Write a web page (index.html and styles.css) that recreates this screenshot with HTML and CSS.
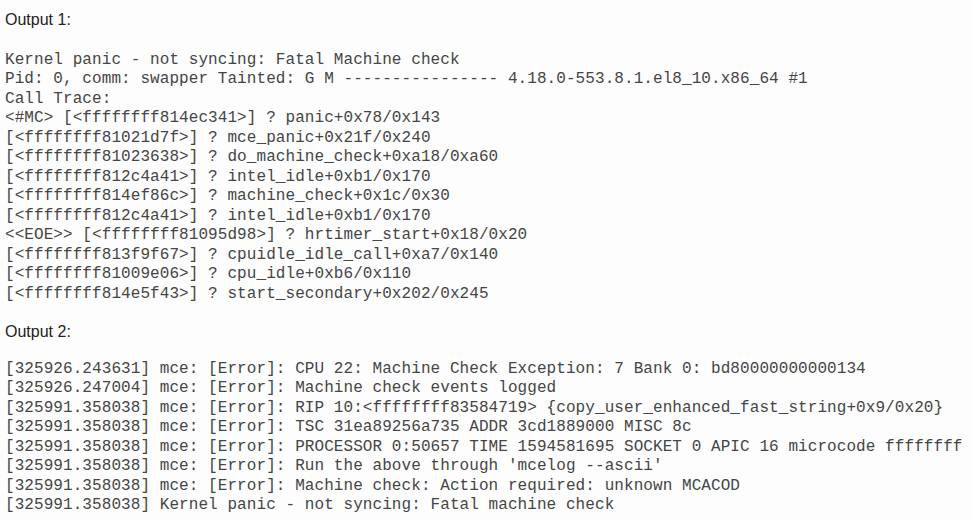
FILE: index.html
```html
<!DOCTYPE html>
<html>
<head>
<meta charset="utf-8">
<link rel="stylesheet" href="styles.css">
</head>
<body>
<main class="page">
<h2 class="heading heading-first">Output 1:</h2>
<pre class="log log-first">Kernel panic - not syncing: Fatal Machine check
Pid: 0, comm: swapper Tainted: G M ---------------- 4.18.0-553.8.1.el8_10.x86_64 #1
Call Trace:
&lt;#MC&gt; [&lt;ffffffff814ec341&gt;] ? panic+0x78/0x143
[&lt;ffffffff81021d7f&gt;] ? mce_panic+0x21f/0x240
[&lt;ffffffff81023638&gt;] ? do_machine_check+0xa18/0xa60
[&lt;ffffffff812c4a41&gt;] ? intel_idle+0xb1/0x170
[&lt;ffffffff814ef86c&gt;] ? machine_check+0x1c/0x30
[&lt;ffffffff812c4a41&gt;] ? intel_idle+0xb1/0x170
&lt;&lt;EOE&gt;&gt; [&lt;ffffffff81095d98&gt;] ? hrtimer_start+0x18/0x20
[&lt;ffffffff813f9f67&gt;] ? cpuidle_idle_call+0xa7/0x140
[&lt;ffffffff81009e06&gt;] ? cpu_idle+0xb6/0x110
[&lt;ffffffff814e5f43&gt;] ? start_secondary+0x202/0x245</pre>
<h2 class="heading heading-second">Output 2:</h2>
<pre class="log log-second">[325926.243631] mce: [Error]: CPU 22: Machine Check Exception: 7 Bank 0: bd80000000000134
[325926.247004] mce: [Error]: Machine check events logged
[325991.358038] mce: [Error]: RIP 10:&lt;ffffffff83584719&gt; {copy_user_enhanced_fast_string+0x9/0x20}
[325991.358038] mce: [Error]: TSC 31ea89256a735 ADDR 3cd1889000 MISC 8c
[325991.358038] mce: [Error]: PROCESSOR 0:50657 TIME 1594581695 SOCKET 0 APIC 16 microcode ffffffff
[325991.358038] mce: [Error]: Run the above through 'mcelog --ascii'
[325991.358038] mce: [Error]: Machine check: Action required: unknown MCACOD
[325991.358038] Kernel panic - not syncing: Fatal machine check</pre>
</main>
</body>
</html>
```

FILE: styles.css
```css
html, body {
  margin: 0;
  padding: 0;
  background: #fdfdfd;
}

.page {
  padding: 0 0 0 5px;
  overflow: hidden;
  width: 968px;
  height: 521px;
}

.heading {
  font-family: "Liberation Sans", Arial, sans-serif;
  font-size: 16px;
  font-weight: normal;
  line-height: 19.5px;
  color: #222;
  margin: 0;
}

.heading-first {
  padding-top: 10px;
}

.heading-second {
  margin-top: 18px;
}

.log {
  font-family: "Liberation Mono", "Courier New", monospace;
  font-size: 16px;
  line-height: 19.5px;
  color: #454545;
  margin: 0;
  letter-spacing: 0.07px;
  white-space: pre;
}

.log-first {
  margin-top: 21px;
}

.log-second {
  margin-top: 18px;
}
```
